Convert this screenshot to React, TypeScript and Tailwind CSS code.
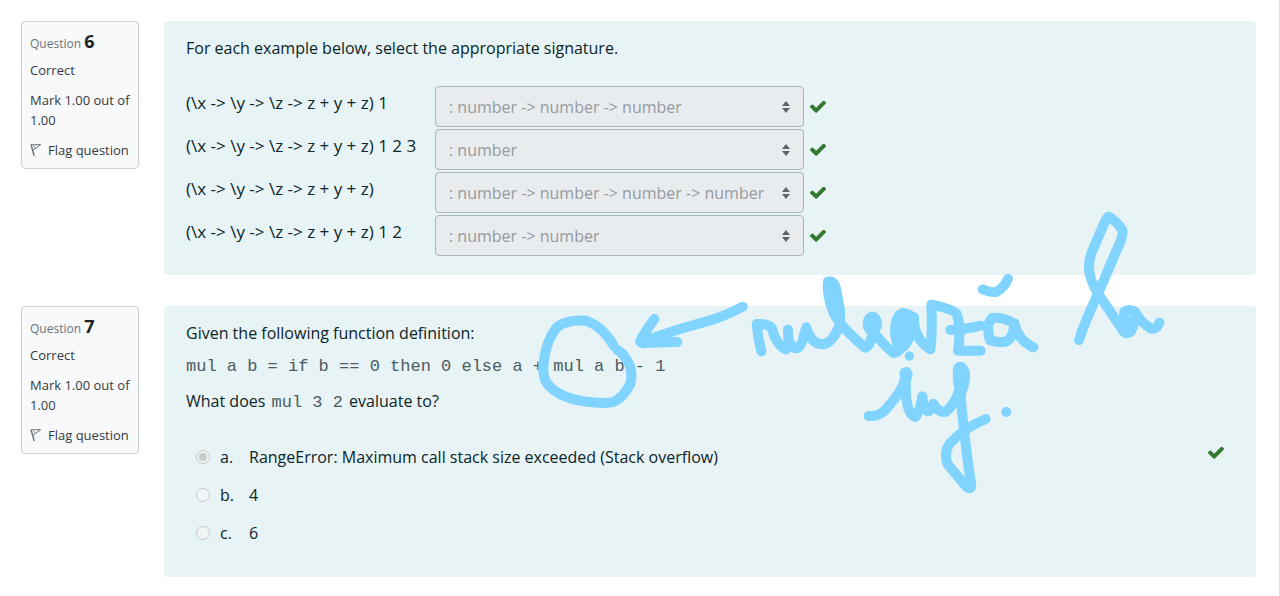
import React from "react";

const matches = [
  { expression: "(\\x -> \\y -> \\z -> z + y + z) 1", answer: ": number -> number -> number" },
  { expression: "(\\x -> \\y -> \\z -> z + y + z) 1 2 3", answer: ": number" },
  { expression: "(\\x -> \\y -> \\z -> z + y + z)", answer: ": number -> number -> number -> number" },
  { expression: "(\\x -> \\y -> \\z -> z + y + z) 1 2", answer: ": number -> number" },
];

const choices = [
  { letter: "a.", text: "RangeError: Maximum call stack size exceeded (Stack overflow)" },
  { letter: "b.", text: "4" },
  { letter: "c.", text: "6" },
];

function Check() {
  return (
    <svg viewBox="121 370 1550 1160" className="h-3 w-4 shrink-0 fill-[#357a32]" role="img" aria-label="Correct">
      <path d="M1671 566q0 40-28 68l-724 724-136 136q-28 28-68 28t-68-28l-136-136-362-362q-28-28-28-68t28-68l136-136q28-28 68-28t68 28l294 295 656-657q28-28 68-28t68 28l136 136q28 28 28 68z" />
    </svg>
  );
}

function Flag() {
  return (
    <svg viewBox="0 0 12 14" className="h-3.5 w-3 shrink-0" fill="none" stroke="#6a737b" aria-hidden="true">
      <path d="M1 1.5 L4.2 13" strokeWidth="1.4" />
      <path d="M1.2 1.7 H10.6 L3.2 7" strokeWidth="1" />
      <path d="M3.3 2.5 L5 5.2" strokeWidth="0.7" />
    </svg>
  );
}

function InfoCard({ number }: { number: number }) {
  return (
    <aside className="w-[118px] shrink-0 self-start rounded-sm border border-[#cad0d7] bg-[#f8f9fa] pt-[9px] pr-1 pb-2 pl-2 text-[13px] leading-5 text-[#343a40]">
      <h3 className="text-xs leading-5 text-[#6a737b]">
        Question <span className="text-lg leading-5 font-bold text-[#1d2125]">{number}</span>
      </h3>
      <div className="mt-1.5">Correct</div>
      <div className="mt-2.5">Mark 1.00 out of 1.00</div>
      <button type="button" className="mt-2.5 flex items-center gap-1.5 whitespace-nowrap">
        <Flag />
        Flag question
      </button>
    </aside>
  );
}

function Question({ number, children }: { number: number; children: React.ReactNode }) {
  return (
    <section className="flex gap-[25px]">
      <InfoCard number={number} />
      <div className="min-w-0 grow rounded bg-[#e7f3f5] px-[22px] pt-[17px] text-[#0c2529]">{children}</div>
    </section>
  );
}

function Ink() {
  return (
    <svg
      className="pointer-events-none absolute top-0 left-0 h-[596px] w-[1280px]"
      viewBox="0 0 1280 596"
      fill="none"
      stroke="#80d4ff"
      strokeWidth="30"
      strokeLinecap="round"
      strokeLinejoin="round"
      aria-hidden="true"
    >
      <g transform="translate(520 290) scale(.33333)">
        <path d="M282 168 Q248 110 198 92 Q140 88 110 112 Q80 150 72 210 Q66 255 78 275 Q105 318 180 332 Q240 342 275 337 Q305 330 332 280 Q340 240 322 212 Q305 185 292 180" />
        <path d="M668 50 Q610 80 580 88 L470 120 L375 152" />
        <path d="M403 87 Q370 132 360 155 Q365 162 380 158 L472 156" />
      </g>
      <g transform="translate(740 260) scale(.33333)">
        <path d="M64 274 Q54 235 50 192 Q85 190 96 205 Q108 255 138 268 Q148 255 144 209 Q142 258 168 265 Q185 262 192 225 L199 202 Q212 253 250 253 Q278 248 300 193" />
        <path d="M264 65 Q282 60 288 85 L300 150 V188 Q270 155 263 85 Z" fill="#80d4ff" />
        <path d="M300 188 Q320 215 375 263 Q392 260 397 218" />
        <ellipse cx="397" cy="191" rx="14" ry="21" fill="#80d4ff" />
        <path d="M397 210 Q425 250 460 279 Q478 276 490 255" />
      </g>
      <g transform="translate(860 250) scale(.33333)">
        <path d="M130 189 Q105 195 105 245 Q108 280 118 295 Q150 290 162 205 Q155 195 130 189 Z" fill="#80d4ff" />
        <path d="M162 202 Q160 265 211 298 Q218 250 214 164 Q280 178 290 192 Q305 230 294 302 H362" />
        <path d="M271 240 Q330 236 362 227" />
        <circle cx="148" cy="318" r="14" fill="#80d4ff" stroke="none" />
        <path d="M463 220 Q425 200 396 204 Q378 222 389 270 Q415 280 440 274 Q462 260 463 220 Q475 272 520 292" />
        <path d="M368 118 Q400 130 410 125 Q435 111 444 86" />
        <path d="M26 498 Q60 500 80 475 Q130 420 136 382 Q128 368 140 366 Q147 375 137 388 L138 440 Q144 495 166 501 Q180 485 187 439 Q192 483 205 484 Q214 480 220 461 Q235 490 258 485 Q285 463 300 415" />
        <path d="M294 355 Q305 340 315 370 Q318 392 303 430 Q290 395 294 355 Z" fill="#80d4ff" />
        <path d="M300 415 Q310 550 334 708 Q332 720 320 711 L263 643 Q250 610 268 582 Q310 535 377 507" />
        <circle cx="439" cy="486" r="15" fill="#80d4ff" stroke="none" />
      </g>
      <g transform="translate(1030 190) scale(.33333)">
        <path d="M147 450 Q162 402 200 320 L260 180 Q282 135 277 120 Q260 94 237 80 Q230 82 224 97 L188 180 Q171 220 180 255 Q188 290 215 327 Q265 400 280 424 Q292 434 303 424 Q321 385 314 365 Q296 355 283 365 Q280 385 295 410" />
        <path d="M314 365 Q335 400 362 415 Q380 420 388 398" />
      </g>
    </svg>
  );
}

export default function App() {
  return (
    <main className="relative flex min-h-screen flex-col gap-[31px] overflow-hidden border-r border-[#dee2e6] bg-white pt-[21px] pr-[23px] pb-[19px] pl-[21px] font-['Open_Sans','Noto_Sans',sans-serif] text-base leading-5">
      <Question number={6}>
        <p>For each example below, select the appropriate signature.</p>
        <div className="mt-7 mb-[19px] flex flex-col gap-0.5">
          {matches.map((m, i) => (
            <div key={i} className="flex items-center">
              <label htmlFor={`match-${i}`} className="w-[249px] shrink-0 pb-2 text-[17px] leading-5 whitespace-nowrap">
                {m.expression}
              </label>
              <div className="grid w-[369px] shrink-0 items-center">
                <select
                  id={`match-${i}`}
                  disabled
                  className="col-start-1 row-start-1 h-[41px] w-full appearance-none rounded border border-[#a9b3ba] bg-[#e9ecef] pl-[13px] text-base text-[#959ba0] opacity-100"
                >
                  <option>{m.answer}</option>
                </select>
                <svg viewBox="0 0 8 12" className="col-start-1 row-start-1 mr-3.5 h-3 w-2 justify-self-end fill-[#5d646b]" aria-hidden="true">
                  <path d="M4 0 8 5H0zM4 12 0 7h8z" />
                </svg>
              </div>
              <span className="ml-1.5">
                <Check />
              </span>
            </div>
          ))}
        </div>
      </Question>

      <Question number={7}>
        <p>Given the following function definition:</p>
        <p className="mt-3.5 font-['Liberation_Mono',monospace] text-[17px] leading-5 text-[#4c5c5f]">
          mul a b = if b == 0 then 0 else a + mul a b - 1
        </p>
        <p className="mt-3.5">
          What does{" "}
          <code className="px-0.5 font-['Liberation_Mono',monospace] text-[17px] leading-5 text-[#4c5c5f]">mul 3 2</code>{" "}
          evaluate to?
        </p>
        <div className="mt-[34px] mb-[34px] flex flex-col gap-[18px] pl-2.5">
          {choices.map((c, i) => (
            <div key={c.letter} className="flex items-center">
              <input
                type="radio"
                id={`choice-${i}`}
                name="choice"
                disabled
                defaultChecked={i === 0}
                className="size-3.5 shrink-0 appearance-none rounded-full border border-[#c6cacb] bg-[#f3f6f6] bg-clip-padding checked:bg-[#c6cacb] checked:shadow-[inset_0_0_0_2px_#f3f6f6]"
              />
              <label htmlFor={`choice-${i}`} className="ml-2.5 flex">
                <span className="w-[29px]">{c.letter}</span>
                <span>{c.text}</span>
              </label>
              {i === 0 && (
                <span className="mr-2.5 mb-2 ml-auto">
                  <Check />
                </span>
              )}
            </div>
          ))}
        </div>
      </Question>
      <Ink />
    </main>
  );
}
